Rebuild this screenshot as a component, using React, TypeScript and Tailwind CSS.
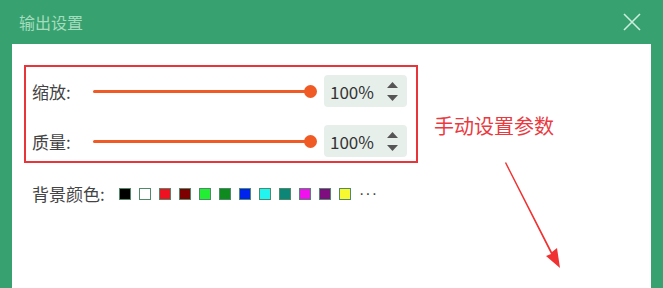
import React from "react";

const swatches = [
  "#000000",
  "#ffffff",
  "#ee1122",
  "#7f0000",
  "#22ee33",
  "#0f8a1e",
  "#0022ee",
  "#22f5f0",
  "#0d8577",
  "#f011ee",
  "#7f0d80",
  "#f8f830",
];

const font = { fontFamily: '"Noto Sans CJK SC", "Noto Sans", sans-serif' };

const SliderRow: React.FC<{ label: string }> = ({ label }) => (
  <div className="flex items-center h-[32px]">
    <span className="w-[61px] text-[17px] text-[#444] leading-none">{label}</span>
    {/* Track */}
    <div className="relative w-[224px] h-[13px] flex items-center">
      <div className="w-[218px] h-[3px] bg-[#f05a24] rounded-full" />
      <div className="absolute right-0 w-[13px] h-[13px] rounded-full bg-[#f05a24]" />
    </div>
    {/* Number input */}
    <div className="ml-[7px] w-[83px] h-[32px] rounded-[4px] bg-[#e7efeb] flex items-center pl-[6px] pr-[9px]">
      <span className="flex-1 text-[17px] text-[#333] leading-none">100%</span>
      <div className="flex flex-col gap-[7px]">
        <svg width="11" height="6" viewBox="0 0 11 6">
          <path d="M5.5 0L11 6H0z" fill="#555" />
        </svg>
        <svg width="11" height="6" viewBox="0 0 11 6">
          <path d="M0 0h11L5.5 6z" fill="#555" />
        </svg>
      </div>
    </div>
  </div>
);

const App: React.FC = () => {
  return (
    <div className="w-[663px] h-[288px] bg-[#37a26f] flex flex-col overflow-hidden" style={font}>
      {/* Header */}
      <div className="h-[44px] flex items-center justify-between pl-[19px] pr-[22px]">
        <span className="text-[16px] text-[#a5dcbf] leading-none">输出设置</span>
        <svg width="18" height="18" viewBox="0 0 18 18">
          <path d="M1 1L17 17M17 1L1 17" stroke="#c9eedb" strokeWidth="1.6" />
        </svg>
      </div>

      {/* Body */}
      <div className="relative mx-[12px] flex-1 bg-white pt-[21px] pl-[12px]">
        <div className="w-[394px] h-[98px] border-2 border-[#e8353a] pt-[8px] pl-[6px] flex flex-col gap-[18px]">
          <SliderRow label="缩放:" />
          <SliderRow label="质量:" />
        </div>

        {/* Background colours */}
        <div className="flex items-center mt-[22px] pl-[8px]">
          <span className="w-[87px] text-[17px] text-[#444] leading-none">背景颜色:</span>
          <div className="flex gap-[8px] items-center">
            {swatches.map((c) => (
              <div
                key={c}
                className="w-[12px] h-[12px] border border-[#4f8a6a]"
                style={{ backgroundColor: c }}
              />
            ))}
          </div>
          <span
            className="ml-[8px] text-[16px] text-[#444] tracking-[1px] leading-none"
            style={{ fontFamily: '"Liberation Sans", sans-serif' }}
          >
            ···
          </span>
        </div>

        {/* Annotation */}
        <span className="absolute left-[422px] top-[72px] text-[20px] text-[#ea3a3f] leading-none">
          手动设置参数
        </span>
        <svg className="absolute left-[490px] top-[116px]" width="60" height="110" viewBox="0 0 60 110">
          <path d="M3 3L4 2L50 92L55 88L58 108L44 96L49 94z" fill="#f03232" />
        </svg>
      </div>
    </div>
  );
};

export default App;
